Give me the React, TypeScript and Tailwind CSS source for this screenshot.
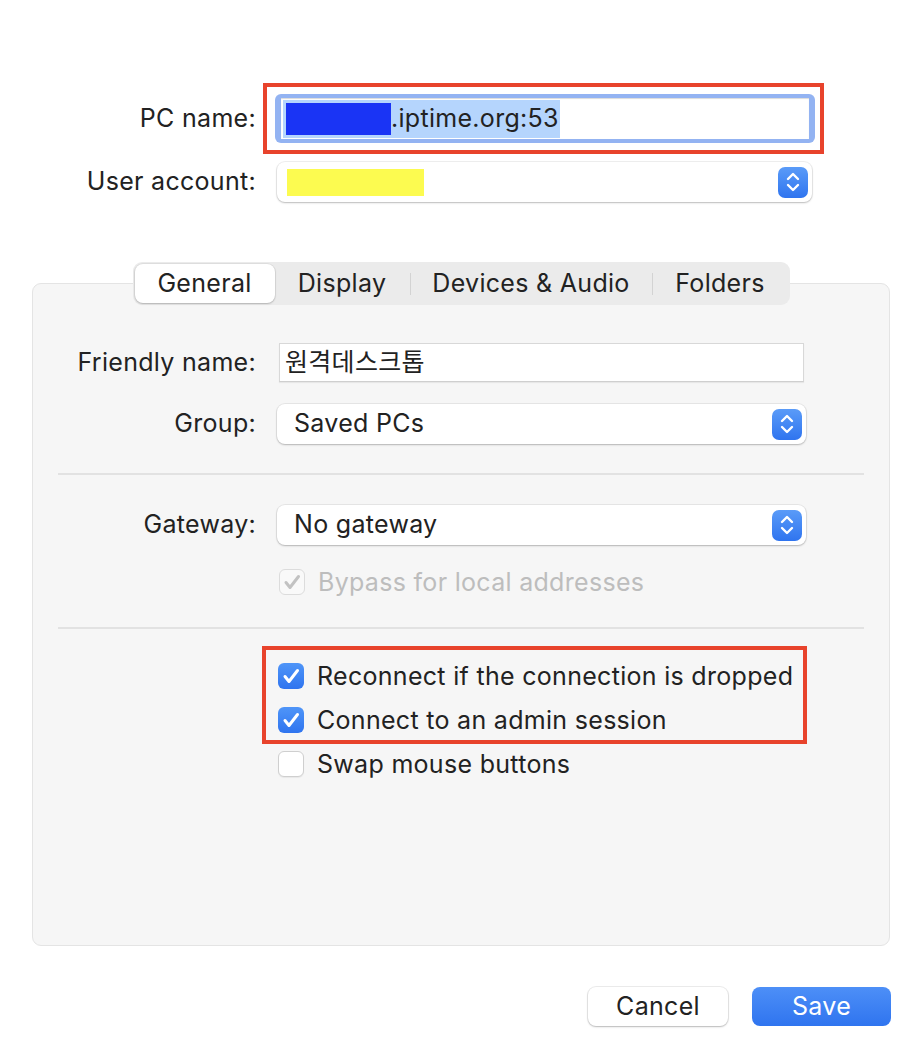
import React from "react";

const font = { fontFamily: '"Inter", "Noto Sans CJK KR", sans-serif' };

function Stepper() {
  return (
    <span className="flex h-[31px] w-[30px] items-center justify-center rounded-[7px] bg-gradient-to-b from-[#5a9bf8] to-[#2f74ef]">
      <svg width="16" height="24" viewBox="0 0 16 24" fill="none" stroke="white" strokeWidth={2.4} strokeLinecap="round" strokeLinejoin="round">
        <path d="M3 9l5-5 5 5" />
        <path d="M3 15l5 5 5-5" />
      </svg>
    </span>
  );
}

function Popup({ children, width }: { children: React.ReactNode; width: string }) {
  return (
    <div
      className={`flex h-[40px] ${width} items-center justify-between rounded-[8px] bg-white pl-[17px] pr-[4px] shadow-[0_0_0_1px_rgba(0,0,0,0.06),0_1px_2px_rgba(0,0,0,0.22)]`}
    >
      <div className="flex items-center">{children}</div>
      <Stepper />
    </div>
  );
}

function Check({ checked, disabled }: { checked: boolean; disabled?: boolean }) {
  if (disabled) {
    return (
      <span className="flex h-[26px] w-[26px] items-center justify-center rounded-[6px] border border-[#dcdcdc] bg-[#f9f9f9]">
        <svg width="18" height="16" viewBox="0 0 18 16" fill="none" stroke="#c2c2c2" strokeWidth={3} strokeLinecap="round" strokeLinejoin="round">
          <path d="M3 8.5l4 5L15.5 2.5" />
        </svg>
      </span>
    );
  }
  if (checked) {
    return (
      <span className="flex h-[26px] w-[26px] items-center justify-center rounded-[6px] bg-gradient-to-b from-[#4f95f8] to-[#2f74ef]">
        <svg width="18" height="16" viewBox="0 0 18 16" fill="none" stroke="white" strokeWidth={3} strokeLinecap="round" strokeLinejoin="round">
          <path d="M3 8.5l4 5L15.5 2.5" />
        </svg>
      </span>
    );
  }
  return (
    <span className="h-[26px] w-[26px] rounded-[6px] border border-[#cfcfcf] bg-white shadow-[0_1px_1px_rgba(0,0,0,0.06)]" />
  );
}

export default function App() {
  return (
    <div className="h-[1050px] w-[922px] bg-white text-[25px] tracking-[0.3px] text-[#222222]" style={font}>
      {/* top rows */}
      <div className="relative flex items-center pt-[94px]">
        <span className="w-[256px] text-right">PC name:</span>
        <div className="ml-[19px] h-[49px] w-[540px] rounded-[6px] bg-[#93b3f2] px-[6px] py-[4px]">
          <div className="flex h-full items-center bg-white pl-[2px] shadow-[inset_0_1px_1px_rgba(0,0,0,0.15)]">
            <div className="flex h-[38px] items-center bg-[#b5d5fd] pl-[3px]">
              <span className="h-[32px] w-[105px] bg-[#1a34f5]" />
              <span className="pr-[1px] leading-none">.iptime.org:53</span>
            </div>
          </div>
        </div>
        <div className="absolute left-[263px] top-[83px] h-[71px] w-[561px] border-[4px] border-[#e8432c]" />
      </div>

      <div className="mt-[19px] flex items-center">
        <span className="w-[256px] text-right">User account:</span>
        <div className="ml-[21px]">
          <Popup width="w-[535px]">
            <span className="-ml-[7px] h-[27px] w-[137px] bg-[#fcfb50]" />
          </Popup>
        </div>
      </div>

      {/* tabs + panel */}
      <div className="mt-[60px] flex justify-center">
        <div className="relative z-10 flex h-[43px] items-center rounded-[9px] bg-[#ebebeb] p-[2px]">
          <span className="flex h-[39px] w-[140px] items-center justify-center rounded-[8px] bg-white shadow-[0_0_0_1px_rgba(0,0,0,0.05),0_1px_2px_rgba(0,0,0,0.2)]">
            General
          </span>
          <span className="flex w-[135px] items-center justify-center">Display</span>
          <span className="h-[22px] w-px bg-[#d3d3d3]" />
          <span className="flex w-[241px] items-center justify-center">Devices &amp; Audio</span>
          <span className="h-[22px] w-px bg-[#d3d3d3]" />
          <span className="flex w-[135px] items-center justify-center">Folders</span>
        </div>
      </div>

      <div className="mx-[32px] -mt-[22px] h-[663px] rounded-[9px] border border-[#e4e4e4] bg-[#f6f6f6] px-[25px]">
        <div className="flex items-center pt-[59px]">
          <span className="w-[198px] text-right">Friendly name:</span>
          <div className="ml-[23px] flex h-[39px] w-[525px] items-center border border-[#d8d8d8] border-b-[#cfcfcf] bg-white pl-[5px] shadow-[0_1px_1px_rgba(0,0,0,0.06)]">
            원격데스크톱
          </div>
        </div>

        <div className="mt-[22px] flex items-center">
          <span className="w-[198px] text-right">Group:</span>
          <div className="ml-[21px]">
            <Popup width="w-[529px]">Saved PCs</Popup>
          </div>
        </div>

        <div className="mt-[29px] h-[2px] bg-[#e2e2e2]" />

        <div className="mt-[30px] flex items-center">
          <span className="w-[198px] text-right">Gateway:</span>
          <div className="ml-[21px]">
            <Popup width="w-[529px]">No gateway</Popup>
          </div>
        </div>

        <div className="ml-[221px] mt-[24px] flex h-[26px] items-center gap-[13px] leading-[26px]">
          <Check checked disabled />
          <span className="text-[#bdbdbd]">Bypass for local addresses</span>
        </div>

        <div className="mt-[32px] h-[2px] bg-[#e2e2e2]" />

        <div className="relative ml-[220px] mt-[34px] flex flex-col gap-[18px] leading-[26px]">
          <div className="flex h-[26px] items-center gap-[13px]">
            <Check checked />
            <span>Reconnect if the connection is dropped</span>
          </div>
          <div className="flex h-[26px] items-center gap-[13px]">
            <Check checked />
            <span>Connect to an admin session</span>
          </div>
          <div className="flex h-[26px] items-center gap-[13px]">
            <Check checked={false} />
            <span>Swap mouse buttons</span>
          </div>
          <div className="absolute -left-[16px] -top-[17px] h-[98px] w-[545px] border-[4px] border-[#e8432c]" />
        </div>
      </div>

      <div className="mr-[31px] mt-[41px] flex justify-end gap-[24px]">
        <button className="h-[39px] w-[140px] rounded-[8px] bg-white shadow-[0_0_0_1px_rgba(0,0,0,0.07),0_1px_2px_rgba(0,0,0,0.22)]">
          Cancel
        </button>
        <button className="h-[39px] w-[139px] rounded-[8px] bg-gradient-to-b from-[#4d8ff7] to-[#2f74ef] text-white">
          Save
        </button>
      </div>
    </div>
  );
}
